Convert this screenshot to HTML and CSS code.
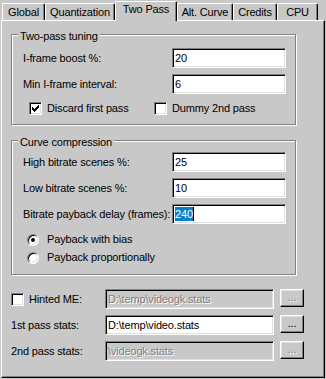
FILE: index.html
```html
<!DOCTYPE html>
<html>
<head>
<meta charset="utf-8">
<link rel="stylesheet" href="styles.css">
</head>
<body>
<div class="tabs">
  <div class="tab t-global">Global</div>
  <div class="tab t-quant">Quantization</div>
  <div class="tab sel t-two">Two Pass</div>
  <div class="tab t-alt">Alt. Curve</div>
  <div class="tab t-credits">Credits</div>
  <div class="tab t-cpu">CPU</div>
</div>
<div class="panel">
  <div class="group">
    <div class="legend">Two-pass tuning</div>
    <div class="field f-first1"><span>I-frame boost %:</span><div class="edit">20</div></div>
    <div class="field"><span>Min I-frame interval:</span><div class="edit">6</div></div>
    <div class="checks">
      <div class="check c-first"><span class="cb"><svg width="9" height="9" viewBox="0 0 9 9" shape-rendering="crispEdges"><rect x="1" y="3" width="1" height="3"/><rect x="2" y="4" width="1" height="3"/><rect x="3" y="5" width="1" height="3"/><rect x="4" y="4" width="1" height="3"/><rect x="5" y="3" width="1" height="3"/><rect x="6" y="2" width="1" height="3"/><rect x="7" y="1" width="1" height="3"/></svg></span>Discard first pass</div>
      <div class="check"><span class="cb"></span>Dummy 2nd pass</div>
    </div>
  </div>
  <div class="group g2">
    <div class="legend">Curve compression</div>
    <div class="field f-first2"><span>High bitrate scenes %:</span><div class="edit">25</div></div>
    <div class="field"><span>Low bitrate scenes %:</span><div class="edit">10</div></div>
    <div class="field"><span>Bitrate payback delay (frames):</span><div class="edit"><span class="selected">240</span></div></div>
    <div class="radio r-first"><span class="rb on"></span>Payback with bias</div>
    <div class="radio"><span class="rb"></span>Payback proportionally</div>
  </div>
  <div class="files">
    <div class="frow">
      <div class="flabel"><span class="cb"></span>Hinted ME:</div>
      <div class="edit disabled">D:\temp\videogk.stats</div>
      <div class="btn disabled">...</div>
    </div>
    <div class="frow">
      <div class="flabel">1st pass stats:</div>
      <div class="edit">D:\temp\video.stats</div>
      <div class="btn">...</div>
    </div>
    <div class="frow">
      <div class="flabel">2nd pass stats:</div>
      <div class="edit disabled">\videogk.stats</div>
      <div class="btn disabled">...</div>
    </div>
  </div>
</div>
</body>
</html>
```
FILE: styles.css
```css
html, body {
  margin: 0;
  padding: 0;
}
body {
  width: 326px;
  height: 379px;
  overflow: hidden;
  background: #c8c8c8;
  font-family: "Liberation Sans", Arial, sans-serif;
  font-size: 11px;
  line-height: 13px;
  letter-spacing: -0.16px;
  color: #000;
}

/* tabs */
.tabs {
  display: flex;
  align-items: flex-end;
  height: 20px;
  padding-left: 2px;
}
.tab {
  box-sizing: border-box;
  height: 17px;
  padding-top: 2px;
  text-align: center;
  white-space: nowrap;
  background: #c8c8c8;
  border-top: 1px solid #fff;
  border-left: 1px solid #fff;
  border-right: 1px solid #000;
  border-radius: 2px 2px 0 0;
  box-shadow: inset -1px 0 0 #808080;
}
.tab.sel {
  height: 20px;
  margin-bottom: -1px;
  padding-top: 1px;
  position: relative;
  z-index: 1;
}
.t-global { width: 43px; }
.t-quant { width: 70px; }
.t-two { width: 62px; }
.t-alt { width: 56px; }
.t-credits { width: 44px; }
.t-cpu { width: 41px; }

/* panel */
.panel {
  box-sizing: border-box;
  margin-left: 1px;
  width: 324px;
  height: 358px;
  border-top: 1px solid #fff;
  border-left: 1px solid #fff;
  border-right: 1px solid #000;
  border-bottom: 1px solid #000;
  box-shadow: inset -1px -1px 0 #808080;
  padding: 13px 0 0 9px;
}

/* group boxes */
.group {
  box-sizing: border-box;
  width: 285px;
  border: 1px solid #808080;
  box-shadow: inset 1px 1px 0 #fff, 1px 1px 0 #fff;
  padding: 0 0 9px 11px;
}
.g2 {
  margin-top: 15px;
  padding-bottom: 10px;
}
.legend {
  width: fit-content;
  margin: -5px 0 0 -5px;
  padding: 0 2px;
  background: #c8c8c8;
  white-space: nowrap;
}
.field {
  display: grid;
  grid-template-columns: 149px 114px;
  align-items: center;
  height: 20px;
  margin-top: 6px;
  white-space: nowrap;
}
.f-first1 { margin-top: 5px; }
.f-first2 { margin-top: 3px; }

.edit {
  box-sizing: border-box;
  height: 20px;
  border: 1px solid;
  border-color: #808080 #fff #fff #808080;
  box-shadow: inset 1px 1px 0 #000, inset -1px -1px 0 #dfdfdf;
  background: #fff;
  padding-left: 2px;
  line-height: 18px;
  white-space: nowrap;
  overflow: hidden;
}
.edit.disabled {
  background: #c8c8c8;
  color: #808080;
  text-shadow: 1px 1px 0 #fff;
}
.selected {
  background: #0a7fc4;
  color: #fff;
  padding: 1px 0;
  border-right: 1px solid #000;
}

/* checkboxes */
.checks {
  display: grid;
  grid-template-columns: 125px auto;
  margin: 8px 0 0 6px;
}
.check {
  display: flex;
  align-items: center;
  gap: 5px;
  white-space: nowrap;
}
.cb {
  box-sizing: border-box;
  display: block;
  flex: none;
  width: 13px;
  height: 13px;
  border: 1px solid;
  border-color: #808080 #fff #fff #808080;
  box-shadow: inset 1px 1px 0 #000, inset -1px -1px 0 #dfdfdf;
  background: #fff;
}
.cb svg {
  display: block;
  margin: 1px;
  fill: #000;
}

/* radios */
.radio {
  display: flex;
  align-items: center;
  gap: 8px;
  margin: 5px 0 0 4px;
  height: 13px;
  white-space: nowrap;
}
.r-first { margin-top: 9px; }
.rb {
  box-sizing: border-box;
  display: flex;
  align-items: center;
  justify-content: center;
  flex: none;
  width: 12px;
  height: 12px;
  border-radius: 50%;
  border: 1px solid;
  border-color: #808080 #fff #fff #808080;
  box-shadow: inset 1px 1px 0 #000, inset -1px -1px 0 #dfdfdf;
  background: #fff;
}
.rb.on::after {
  content: "";
  width: 4px;
  height: 4px;
  border-radius: 50%;
  background: #000;
}

/* file rows */
.files {
  margin-top: 14px;
}
.frow {
  display: grid;
  grid-template-columns: 88px 169px 24px;
  column-gap: 6px;
  align-items: center;
  height: 20px;
  margin-bottom: 6px;
}
.flabel {
  display: flex;
  align-items: center;
  gap: 5px;
  white-space: nowrap;
}
.btn {
  box-sizing: border-box;
  align-self: start;
  width: 24px;
  height: 18px;
  border: 1px solid;
  border-color: #fff #000 #000 #fff;
  box-shadow: inset -1px -1px 0 #808080, inset 1px 1px 0 #dfdfdf;
  background: #c8c8c8;
  text-align: center;
  line-height: 14px;
}
.btn.disabled {
  color: #808080;
  text-shadow: 1px 1px 0 #fff;
}
```
